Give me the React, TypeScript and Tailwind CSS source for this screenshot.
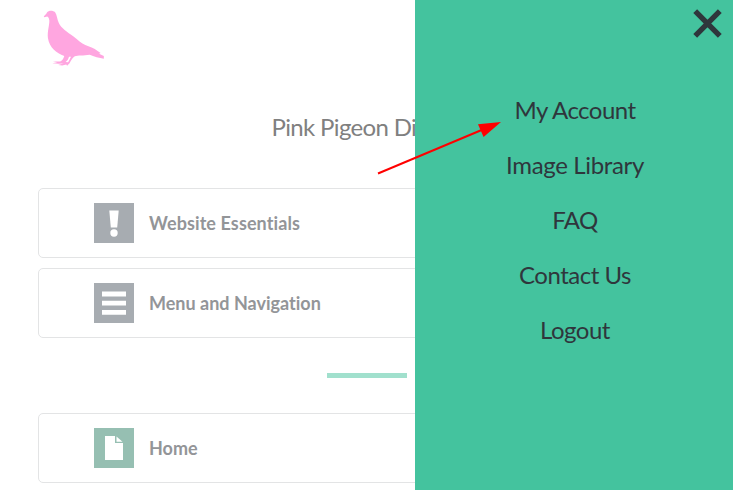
import type { ReactNode } from "react";

const menuItems = [
  { label: "My Account", tracking: "tracking-[-0.53px]" },
  { label: "Image Library", tracking: "tracking-[-0.35px]" },
  { label: "FAQ", tracking: "tracking-[-0.5px]" },
  { label: "Contact Us", tracking: "tracking-[-0.48px]" },
  { label: "Logout", tracking: "tracking-[-0.5px]" },
];

function Pigeon() {
  return (
    <svg width="62" height="57" viewBox="0 0 63 56" preserveAspectRatio="none" fill="#ffa6e0" className="block">
      <path d="M0.8 6.2 C2.5 4.8 3.5 3.6 4 2.4 C5.5 0.3 10 0 12.3 2.2 C14.3 5 14.2 9 16.2 13 C18.4 17.8 24.5 21.4 31 26 C35.5 29.2 39 32.8 43 34.5 C47 36 52 37.5 55.5 40.3 L58.5 42.3 L57 43 L61.8 45.2 L61.8 47.8 C57.5 47.5 51.5 45.5 47.5 44 C41 45.2 35.5 44.3 32.3 45.5 C29.5 47 28.5 50 27 52.3 L24.5 54.8 L23.6 53.6 L19.5 54.5 L15.4 54.1 L20.5 52.6 L23.2 52.3 L16 52.7 L9.5 52.3 L14.5 51.3 L9.8 50.5 L17.5 50.6 C20 49.5 20.8 47.5 21.6 45.2 C13.5 42.3 6.6 37 5 27.5 C4.2 21 6.8 14 6.4 10 C6 7.8 5.5 7 4.3 6.4 L1.3 7.2 Z M28.5 46 L26.4 46 C25.8 48.5 24.5 50.2 23 51 L25.5 51.3 C26.5 50 27.3 48 28.5 46 Z" fillRule="evenodd" />
    </svg>
  );
}

function ExclamationIcon() {
  return (
    <svg width="40" height="40" fill="white">
      <path d="M15.3 7.5h9.4l-1.5 17h-6.4z" />
      <circle cx="20" cy="30" r="3.7" />
    </svg>
  );
}

function BarsIcon() {
  return (
    <svg width="40" height="40" fill="white">
      <path d="M8 8.5h24v5H8zM8 17.7h24v4.8H8zM8 27h24v4.8H8z" />
    </svg>
  );
}

function PageIcon() {
  return (
    <svg width="40" height="40" fill="white">
      <path d="M11 8h10v7h8v17H11z" />
      <path d="M22.5 8.5v5.3h6z" />
    </svg>
  );
}

function Card({
  title,
  tone,
  tracking = "tracking-normal",
  children,
}: {
  title: string;
  tone: string;
  tracking?: string;
  children: ReactNode;
}) {
  return (
    <div className="flex h-[70px] shrink-0 items-center rounded-[5px] border border-[#e3e4e5] pl-[55px]">
      <div className={`size-10 ${tone}`}>{children}</div>
      <span className={`ml-[15px] text-lg font-bold text-[#939598] [font-variant-ligatures:none] ${tracking}`}>
        {title}
      </span>
    </div>
  );
}

export default function App() {
  return (
    <div className="relative h-[490px] w-[733px] overflow-hidden bg-white font-['Lato',sans-serif]">
      <main className="flex h-full flex-col px-[38px] pt-[10px]">
        <div className="h-[99px] shrink-0 pl-[4.5px]">
          <Pigeon />
        </div>
        <h1 className="h-[79px] shrink-0 pl-[233.5px] text-2xl leading-9 tracking-[-0.65px] whitespace-nowrap text-[#808080]">
          Pink Pigeon Digital
        </h1>
        <div className="flex flex-col gap-[10px]">
          <Card title="Website Essentials" tone="bg-[#a7acb1]" tracking="tracking-[0.1px]">
            <ExclamationIcon />
          </Card>
          <Card title="Menu and Navigation" tone="bg-[#a7acb1]">
            <BarsIcon />
          </Card>
        </div>
        <div className="mt-[35px] mb-[35px] h-[5px] w-20 shrink-0 self-center bg-[#a1e0cd]" />
        <Card title="Home" tone="bg-[#96bfb2]">
          <PageIcon />
        </Card>
      </main>

      <aside className="absolute inset-y-0 right-0 w-[318px] bg-[#44c39e] text-[#2f363c]">
        <button aria-label="Close menu" className="ml-auto flex h-[82px] w-[40px] pt-[9px]">
          <svg width="30" height="30" stroke="currentColor" strokeWidth="5.4">
            <path d="M2.2 2.2 26.8 26.8M26.8 2.2 2.2 26.8" />
          </svg>
        </button>
        <nav className="flex flex-col pl-[2px] text-center text-2xl">
          {menuItems.map(({ label, tracking }) => (
            <a key={label} className={`h-[55px] leading-[55px] ${tracking}`}>
              {label}
            </a>
          ))}
        </nav>
      </aside>

      <svg className="absolute inset-0" width="733" height="490">
        <path d="M378 173.5 484 129" stroke="#ff0000" strokeWidth="1.9" />
        <path d="M501 122 478 124.3 483.6 137z" fill="#ff0000" />
      </svg>
    </div>
  );
}
